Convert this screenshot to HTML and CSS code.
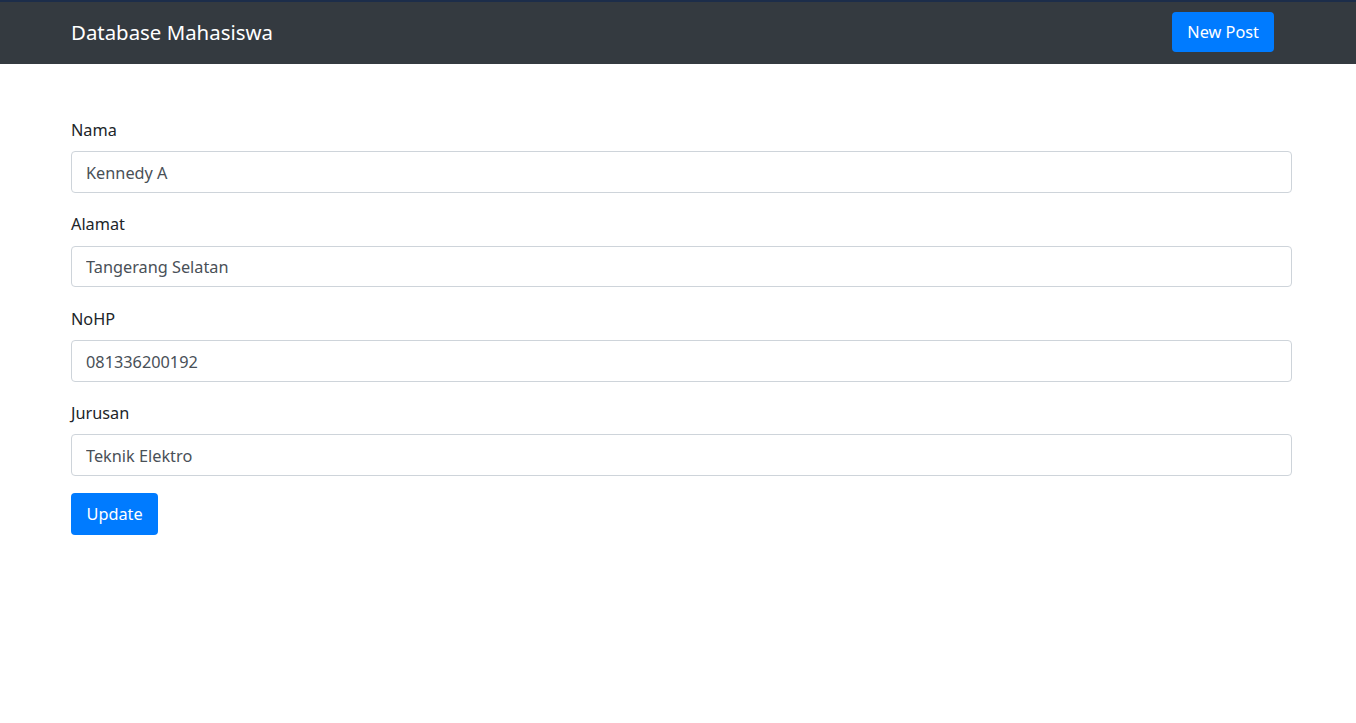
FILE: index.html
```html
<html>
	<head>
		<link rel="stylesheet" href="styles.css">
	</head>
	<body>
		<div class="navbar">
			<a href="#" class="brand">Database Mahasiswa</a>
			<a href="#" class="btn">New Post</a>
		</div>
		<div class="content">
			<form>
				<div class="form-group">
					<label for="nama">Nama</label>
					<input type="text" id="nama" value="Kennedy A">
				</div>
				<div class="form-group">
					<label for="alamat">Alamat</label>
					<input type="text" id="alamat" value="Tangerang Selatan">
				</div>
				<div class="form-group">
					<label for="nohp">NoHP</label>
					<input type="text" id="nohp" value="081336200192">
				</div>
				<div class="form-group">
					<label for="jurusan">Jurusan</label>
					<input type="text" id="jurusan" value="Teknik Elektro">
				</div>
				<button type="submit" class="btn update">Update</button>
			</form>
		</div>
	</body>
</html>
```

FILE: styles.css
```css
body {
	margin: 0;
	font-family: "Noto Sans", "Open Sans", sans-serif;
	font-size: 16.3px;
	color: #212529;
	background-color: white;
}
.navbar {
	display: flex;
	justify-content: space-between;
	align-items: center;
	height: 62px;
	border-top: 2px solid #1c2d4a;
	padding: 0 82px 0 71px;
	background-color: #343a40;
}
.brand {
	color: white;
	text-decoration: none;
	font-size: 20.4px;
	margin-top: -2px;
}
.btn {
	display: inline-block;
	box-sizing: border-box;
	height: 41px;
	line-height: 41px;
	padding: 0 15px;
	border: none;
	border-radius: 4px;
	background-color: #007bff;
	color: white;
	font-family: inherit;
	font-size: 16.3px;
	text-decoration: none;
	cursor: pointer;
}
.navbar .btn {
	margin-top: -2px;
	height: 40px;
	line-height: 40px;
}
.content {
	padding: 52px 64px 0 71px;
}
.form-group {
	margin-bottom: 17.6px;
}
label {
	display: block;
	line-height: 26.4px;
	padding-top: 1px;
	margin-bottom: 7.8px;
}
input {
	display: block;
	width: 100%;
	box-sizing: border-box;
	height: 41.6px;
	padding: 2px 14px 0;
	border: 1px solid #ced4da;
	border-radius: 4px;
	font-family: inherit;
	font-size: 16.3px;
	color: #495057;
}
.update {
	height: 42px;
	line-height: 42px;
	padding: 0 15.5px;
	margin-top: -0.6px;
}
```
